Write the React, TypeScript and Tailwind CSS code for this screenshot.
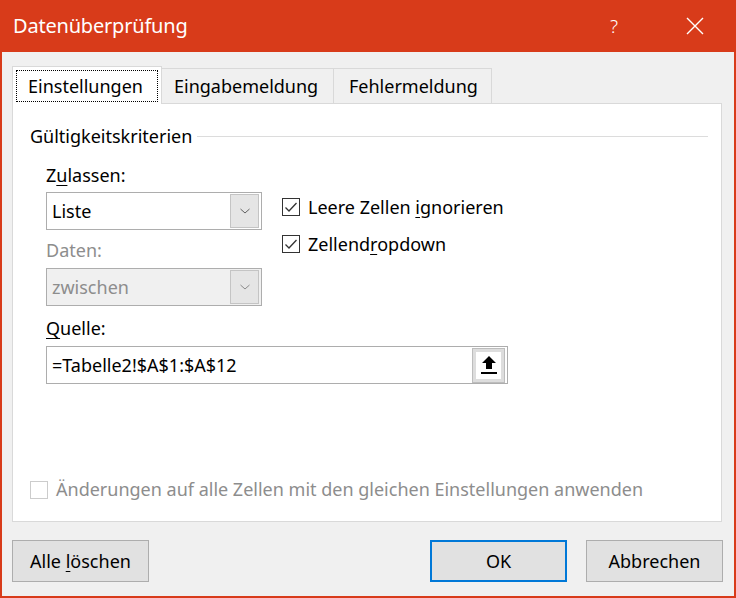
import React from "react";

const font = { fontFamily: '"Noto Sans", "Open Sans", sans-serif' };

const Chevron: React.FC<{ disabled?: boolean }> = ({ disabled }) => (
  <svg width="12" height="8" viewBox="0 0 12 8" className="block">
    <path
      d="M1.5 2 L6 6 L10.5 2"
      fill="none"
      stroke={disabled ? "#8a8a8a" : "#606060"}
      strokeWidth="1"
    />
  </svg>
);

const Select: React.FC<{ value: string; disabled?: boolean }> = ({
  value,
  disabled,
}) => (
  <div
    className={`w-[216px] h-[38px] border border-[#ADADAD] flex items-center justify-between pl-[5px] pr-[2px] ${
      disabled ? "bg-[#F0F0F0] text-[#8D8D8D]" : "bg-white text-black"
    }`}
  >
    <span>{value}</span>
    <div className="w-[29px] h-[34px] bg-[#E5E5E5] border border-[#C4C4C4] flex items-center justify-center">
      <Chevron disabled={disabled} />
    </div>
  </div>
);

const CheckBox: React.FC<{ checked?: boolean; disabled?: boolean }> = ({
  checked,
  disabled,
}) => (
  <div
    className={`w-[18px] h-[18px] border bg-white flex items-center justify-center shrink-0 ${
      disabled ? "border-[#CCCCCC]" : "border-[#333333]"
    }`}
  >
    {checked && (
      <svg width="14" height="12" viewBox="0 0 14 12">
        <path
          d="M1.5 6.5 L5 10 L12.5 2"
          fill="none"
          stroke="#333333"
          strokeWidth="1.3"
        />
      </svg>
    )}
  </div>
);

const Button: React.FC<{ children: React.ReactNode; primary?: boolean }> = ({
  children,
  primary,
}) => (
  <div
    className={`w-[137px] h-[42px] bg-[#E1E1E1] flex items-center justify-center text-black ${
      primary ? "border-2 border-[#0078D7]" : "border border-[#ADADAD]"
    }`}
  >
    {children}
  </div>
);

export default function App() {
  return (
    <div
      className="w-[736px] h-[598px] bg-[#D83B1A] flex flex-col text-[18px] select-none"
      style={font}
    >
      {/* title bar */}
      <div className="h-[52px] flex items-center justify-between text-white shrink-0">
        <span className="pl-[13px] text-[20px] tracking-[-0.2px]">Datenüberprüfung</span>
        <div className="flex items-center">
          <span className="text-[19px] font-light mr-[68px]">?</span>
          <svg width="18" height="18" viewBox="0 0 18 18" className="mr-[32px]">
            <path d="M1 1 L17 17 M17 1 L1 17" stroke="white" strokeWidth="1.4" />
          </svg>
        </div>
      </div>

      {/* body */}
      <div className="flex-1 mx-[2px] mb-[2px] bg-[#F0F0F0] flex flex-col pl-[10px] pr-[11px] pt-[14px]">
        {/* tabs */}
        <div className="flex items-end h-[38px] relative z-10 -mb-px">
          <div className="w-[150px] h-[38px] bg-white border border-b-0 border-[#D9D9D9] p-[3px] pb-[2px]">
            <div className="h-full border border-dotted border-black flex items-center pl-[11px] text-black">
              Einstellungen
            </div>
          </div>
          <div className="w-[172px] h-[36px] border border-l-0 border-b-0 border-[#D9D9D9] flex items-center pl-[12px] text-black">
            Eingabemeldung
          </div>
          <div className="w-[158px] h-[36px] border border-l-0 border-b-0 border-[#D9D9D9] flex items-center pl-[15px] text-black">
            Fehlermeldung
          </div>
        </div>

        {/* panel */}
        <div className="w-[710px] h-[419px] bg-white border border-[#D9D9D9] flex flex-col pl-[17px] text-black">
          <div className="flex items-center mt-[20px] h-[24px]">
            <span>Gültigkeitskriterien</span>
            <div className="flex-1 h-px bg-[#DCDCDC] ml-[5px] mr-[13px] mt-[1px]" />
          </div>

          <div className="flex pl-[16px] mt-[15px]">
            <div className="flex flex-col">
              <span className="h-[24px] leading-[24px]">
                Z<span className="underline underline-offset-[3px]">u</span>lassen:
              </span>
              <div className="mt-[5px]">
                <Select value="Liste" />
              </div>
              <span className="h-[24px] leading-[24px] mt-[8px] text-[#8D8D8D]">Daten:</span>
              <div className="mt-[6px]">
                <Select value="zwischen" disabled />
              </div>
            </div>
            <div className="flex flex-col ml-[20px] mt-[32px] gap-[13px]">
              <div className="flex items-center gap-[8px] h-[24px]">
                <CheckBox checked />
                <span>
                  Leere Zellen <span className="underline underline-offset-[3px]">i</span>gnorieren
                </span>
              </div>
              <div className="flex items-center gap-[8px] h-[24px]">
                <CheckBox checked />
                <span>
                  Zellend<span className="underline underline-offset-[3px]">r</span>opdown
                </span>
              </div>
            </div>
          </div>

          <div className="pl-[16px] mt-[10px] flex flex-col">
            <span className="h-[24px] leading-[24px]">
              <span className="underline underline-offset-[3px]">Q</span>uelle:
            </span>
            <div className="mt-[6px] w-[462px] h-[38px] border border-[#ADADAD] bg-white flex items-center justify-between pl-[5px] pr-[2px]">
              <span>=Tabelle2!$A$1:$A$12</span>
              <div className="w-[33px] h-[35px] bg-[#DDDDDD] border border-[#BDBDBD] p-[3px]">
                <div className="w-full h-full bg-white flex items-center justify-center">
                  <svg width="18" height="22" viewBox="0 0 18 22">
                    <path d="M9 2 L16 9 L12 9 L12 15 L6 15 L6 9 L2 9 Z" fill="black" />
                    <rect x="1" y="18" width="16" height="2" fill="black" />
                  </svg>
                </div>
              </div>
            </div>
          </div>

          <div className="flex items-center gap-[8px] mt-[92px] text-[#8D8D8D]">
            <CheckBox disabled />
            <span>Änderungen auf alle Zellen mit den gleichen Einstellungen anwenden</span>
          </div>
        </div>

        {/* buttons */}
        <div className="flex items-center mt-[18px]">
          <Button>
            <span>
              Alle <span className="underline underline-offset-[3px]">l</span>öschen
            </span>
          </Button>
          <div className="flex-1" />
          <Button primary>OK</Button>
          <div className="w-[19px]" />
          <Button>Abbrechen</Button>
        </div>
      </div>
    </div>
  );
}
